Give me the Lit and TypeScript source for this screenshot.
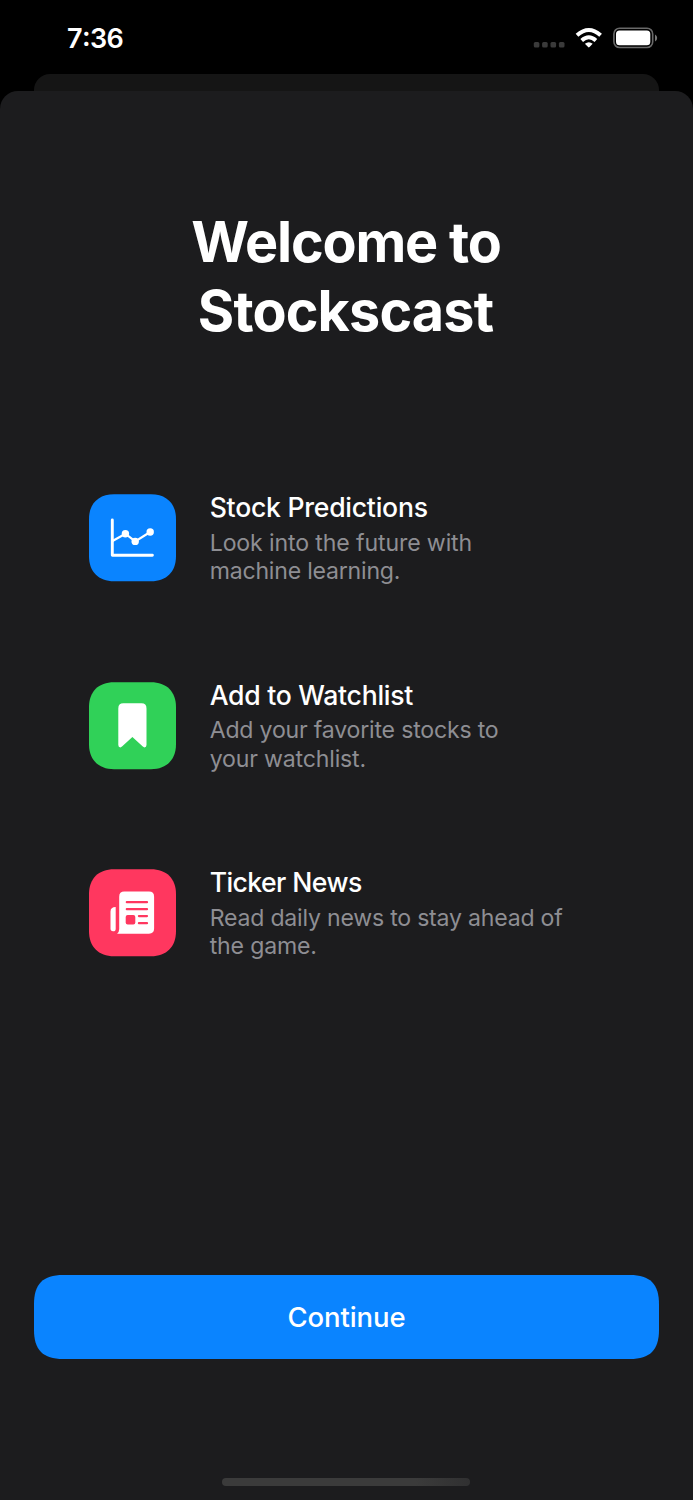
import { LitElement, html, css, svg } from "lit";
import { customElement, property } from "lit/decorators.js";
import { styleMap } from "lit/directives/style-map.js";

interface Line {
  text: string;
  tracking: number;
}

const chartIcon = svg`
  <path d="M23.3 25.9V61.2H63.4" fill="none" stroke="#fff" stroke-width="2.9" stroke-linecap="round" stroke-linejoin="round"/>
  <path d="M23.5 47L36.4 39.7L46.2 47.4L61.2 38" fill="none" stroke="#fff" stroke-width="2.2"/>
  <g fill="#fff"><circle cx="36.4" cy="39.7" r="3.7"/><circle cx="46.2" cy="47.4" r="3.7"/><circle cx="61.2" cy="38" r="3.7"/></g>`;

const bookmarkIcon = svg`
  <path fill="#fff" d="M29.3 26.4Q29.3 21.3 34.3 21.3H52.5Q57.5 21.3 57.5 26.4V63Q57.5 65.4 55.4 65.4Q54.6 65.4 53.8 64.6L43.4 55L33 64.6Q32.2 65.4 31.4 65.4Q29.3 65.4 29.3 63Z"/>`;

const newsIcon = svg`
  <path fill="#fff" d="M35.3 22.6H60Q65.1 22.6 65.1 27.7V59.6Q65.1 64.7 60 64.7H28.1Q30.2 62.9 30.2 59.9V27.7Q30.2 22.6 35.3 22.6Z"/>
  <path fill="#fff" d="M26.7 38.1V59.7Q26.7 62.3 24.1 62.3Q21.5 62.3 21.5 59.6V42.7Q21.5 38.1 26.7 38.1Z"/>
  <g stroke="#ff375f" stroke-width="2.2" stroke-linecap="round">
    <path d="M37.8 33.2H58M37.8 40.2H58M49.9 47.1H58M49.9 54.2H58"/>
  </g>
  <rect x="36.7" y="46" width="9.6" height="9.6" rx="2" fill="#ff375f"/>`;

@customElement("feature-row")
export class FeatureRow extends LitElement {
  @property() color = "";
  @property({ attribute: false }) heading: Line = { text: "", tracking: 0 };
  @property({ attribute: false }) icon: unknown = null;
  @property({ attribute: false }) lines: Line[] = [];

  static styles = css`
    :host { display: flex; gap: 33.7px; height: 87px; }
    .tile { width: 87px; height: 87px; flex: none; display: block; overflow: visible; }
    .text { margin-top: -3px; white-space: nowrap; }
    .heading { font-size: 26.6px; line-height: 32px; font-weight: 500; color: #fff; }
    .desc { margin-top: 5.4px; font-size: 23.1px; line-height: 28.5px; color: #8e8e93; }
    .line { display: block; }
  `;

  private line(l: Line) {
    return html`<span class="line" style=${styleMap({ letterSpacing: `${l.tracking}px` })}>${l.text}</span>`;
  }

  render() {
    return html`
      <svg class="tile" viewBox="0 0 87 87">
        <path fill=${this.color} d="M25 0.2H62C77.5 0.2 87 9.5 87 25V62.2C87 77.7 77.5 87.2 62 87.2H25C9.5 87.2 0 77.7 0 62.2V25C0 9.5 9.5 0.2 25 0.2Z"/>
        ${this.icon}
      </svg>
      <div class="text">
        <div class="heading">${this.line(this.heading)}</div>
        <div class="desc">${this.lines.map((l) => this.line(l))}</div>
      </div>`;
  }
}

@customElement("app-root")
export class AppRoot extends LitElement {
  static styles = css`
    :host {
      display: flex; flex-direction: column; width: 693px; height: 1500px; overflow: hidden;
      background: #000; color: #fff; font-family: Inter, "Liberation Sans", sans-serif;
    }
    .status { height: 74px; flex: none; display: flex; justify-content: space-between; }
    .time {
      margin: 22px 0 0 67px; font-size: 27px; line-height: 33px; font-weight: 600;
      letter-spacing: -0.6px;
    }
    .colon { vertical-align: 2px; line-height: 0; }
    .indicators { width: 173px; height: 74px; }
    .behind { height: 17px; flex: none; margin: 0 34px; background: #151515; border-radius: 16px 16px 0 0; }
    .sheet {
      flex: 1; display: flex; flex-direction: column; background: #1c1c1e;
      border-radius: 18px 18px 0 0; box-sizing: border-box; padding-top: 117px;
    }
    h1 { margin: 0; text-align: center; font-size: 55.7px; line-height: 68.5px; font-weight: 700; }
    .first { display: block; letter-spacing: -1.2px; margin-right: 1px; }
    .second { display: block; letter-spacing: -0.85px; margin-right: 2px; }
    .features { margin: 149.2px 0 0 89px; display: flex; flex-direction: column; gap: 100.5px; }
    button {
      margin: 318.8px 34px 0; height: 84px; padding: 0; border: 0; background: none; color: #fff;
      font: 460 27.5px/84px Inter, "Liberation Sans", sans-serif; letter-spacing: -0.1px; display: grid;
    }
    .shape, .label { grid-area: 1 / 1; }
    .home { width: 248px; height: 8.5px; margin: 119px 0 0 222px; border-radius: 5px; background: linear-gradient(90deg, #3b3b3b 78%, #303031); }
  `;

  render() {
    return html`
      <div class="status">
        <div class="time">7<span class="colon">:</span>36</div>
        <svg class="indicators" viewBox="520 0 173 74">
          <g fill="#3a3a3a">
            <rect x="533.8" y="42" width="5.6" height="5.6" rx="1.5"/><rect x="542.1" y="42" width="5.6" height="5.6" rx="1.5"/>
            <rect x="550.5" y="42" width="5.6" height="5.6" rx="1.5"/><rect x="558.9" y="42" width="5.6" height="5.6" rx="1.5"/>
          </g>
          <g fill="none" stroke="#fff" stroke-width="4">
            <path d="M577 35.3Q588.8 24.7 600.6 35.3"/>
            <path d="M581.7 40.4Q588.8 34.1 595.9 40.4"/>
          </g>
          <path fill="#fff" d="M584.9 43.7Q588.8 40.7 592.7 43.7L589.5 47.1Q588.8 47.8 588.1 47.1Z"/>
          <rect x="613.9" y="28.2" width="38.8" height="19.3" rx="5.7" fill="none" stroke="#696969" stroke-width="1.6"/>
          <rect x="616" y="30.5" width="34.3" height="14.7" rx="3.5" fill="#fff"/>
          <path fill="#777" d="M655 34.5Q657.2 35.5 657.2 38T655 41.5Z"/>
        </svg>
      </div>
      <div class="behind"></div>
      <main class="sheet">
        <h1><span class="first">Welcome to</span><span class="second">Stockscast</span></h1>
        <section class="features">
          <feature-row color="#0a84ff" .icon=${chartIcon} .heading=${{ text: "Stock Predictions", tracking: -0.26 }}
            .lines=${[{ text: "Look into the future with", tracking: -0.12 }, { text: "machine learning.", tracking: -0.22 }]}></feature-row>
          <feature-row color="#30d158" .icon=${bookmarkIcon} .heading=${{ text: "Add to Watchlist", tracking: -0.28 }}
            .lines=${[{ text: "Add your favorite stocks to", tracking: -0.2 }, { text: "your watchlist.", tracking: -0.17 }]}></feature-row>
          <feature-row color="#ff375f" .icon=${newsIcon} .heading=${{ text: "Ticker News", tracking: -0.58 }}
            .lines=${[{ text: "Read daily news to stay ahead of", tracking: -0.22 }, { text: "the game.", tracking: -0.17 }]}></feature-row>
        </section>
        <button>
          <svg class="shape" width="625" height="84" viewBox="0 0 625 84">
            <path fill="#0a84ff" d="M29 0H596C616 0 625 9 625 29V55C625 75 616 84 596 84H29C9 84 0 75 0 55V29C0 9 9 0 29 0Z"/>
          </svg>
          <span class="label">Continue</span>
        </button>
        <div class="home"></div>
      </main>`;
  }
}
